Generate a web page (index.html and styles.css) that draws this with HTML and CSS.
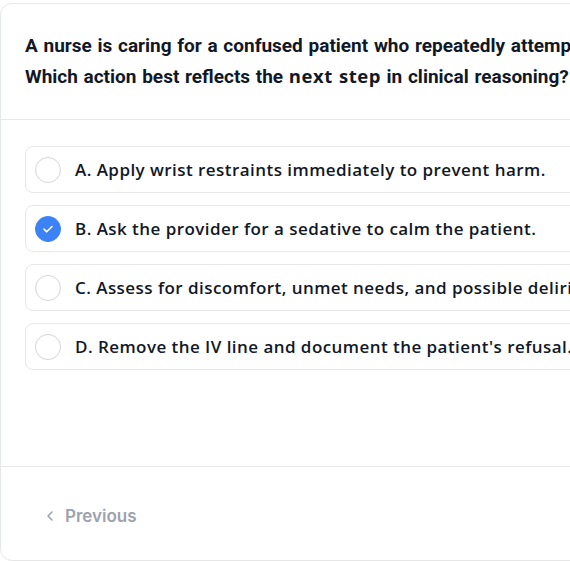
FILE: index.html
```html
<!DOCTYPE html>
<html>
<head>
<meta charset="utf-8">
<link rel="stylesheet" href="styles.css">
</head>
<body>
<div class="card">
  <div class="header">
    <p class="question">A nurse is caring for a confused patient who repeatedly attempts to pull out an IV line.<br>Which action best reflects the <strong class="em">next step</strong> in clinical reasoning?</p>
  </div>
  <div class="options">
    <div class="option"><span class="radio"></span><span class="label">A. Apply wrist restraints immediately to prevent harm.</span></div>
    <div class="option"><span class="radio checked"><svg width="14" height="14" viewBox="0 0 14 14"><path d="M3 7.2l2.7 2.6L11 4.5" fill="none" stroke="#fff" stroke-width="1.6" stroke-linecap="round" stroke-linejoin="round"/></svg></span><span class="label">B. Ask the provider for a sedative to calm the patient.</span></div>
    <div class="option"><span class="radio"></span><span class="label">C. Assess for discomfort, unmet needs, and possible delirium.</span></div>
    <div class="option"><span class="radio"></span><span class="label">D. Remove the IV line and document the patient's refusal.</span></div>
  </div>
  <div class="footer">
    <button class="prev"><svg width="10" height="12" viewBox="0 0 10 12"><path d="M7 2L3 6l4 4" fill="none" stroke="#9ca3af" stroke-width="1.6" stroke-linecap="round" stroke-linejoin="round"/></svg><span>Previous</span></button>
  </div>
</div>
</body>
</html>
```
FILE: styles.css
```css
html, body {
  margin: 0;
  padding: 0;
  background: #ffffff;
}
body {
  padding-top: 3px;
  overflow: hidden;
}
.card {
  width: 820px;
  height: 558px;
  border: 1px solid #e5e7eb;
  border-radius: 12px;
  background: #fff;
  display: flex;
  flex-direction: column;
  box-sizing: border-box;
}
.header {
  height: 116px;
  box-sizing: border-box;
  padding: 26px 24px 0 24px;
  border-bottom: 1px solid #e5e7eb;
}
.question {
  margin: 0;
  font-family: Roboto, "Liberation Sans", sans-serif;
  font-weight: 700;
  font-size: 19px;
  line-height: 31px;
  word-spacing: 1px;
  color: #111827;
  white-space: nowrap;
}
.em {
  font-family: "Open Sans", sans-serif;
  font-weight: 700;
  font-size: 18.5px;
  letter-spacing: 0.5px;
  line-height: 1;
}
.options {
  padding: 26px 24px;
  display: flex;
  flex-direction: column;
  gap: 12px;
  height: 347px;
  box-sizing: border-box;
  border-bottom: 1px solid #e5e7eb;
}
.option {
  display: flex;
  align-items: center;
  gap: 14px;
  height: 47px;
  box-sizing: border-box;
  padding: 0 9px;
  border: 1px solid #e5e7eb;
  border-radius: 8px;
}
.radio {
  width: 26px;
  height: 26px;
  box-sizing: border-box;
  border: 1px solid #d1d5db;
  border-radius: 50%;
  display: flex;
  align-items: center;
  justify-content: center;
  flex: none;
}
.radio.checked {
  background: #3b82f6;
  border-color: #3b82f6;
}
.label {
  font-family: "Open Sans", sans-serif;
  font-weight: 600;
  font-size: 17px;
  letter-spacing: 0.45px;
  color: #111827;
  white-space: nowrap;
  margin-top: -1px;
}
.footer {
  flex: 1;
  display: flex;
  align-items: center;
  padding: 5px 24px 0 24px;
}
.prev {
  display: flex;
  align-items: center;
  gap: 10px;
  background: none;
  border: none;
  padding: 8px 20px;
  font-family: Inter, sans-serif;
  font-weight: 600;
  font-size: 17px;
  color: #9ca3af;
}
```
